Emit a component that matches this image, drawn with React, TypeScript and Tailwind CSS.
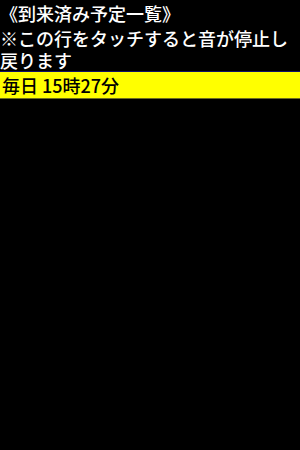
export default function App() {
  return (
    <div
      className="w-[300px] h-[450px] bg-black overflow-hidden"
      style={{ fontFamily: '"Noto Sans CJK JP", "Noto Sans", sans-serif' }}
    >
      <div className="text-white text-[18px] font-medium pt-[2px]">
        <p className="leading-[22px]">《到来済み予定一覧》</p>
        <p className="leading-[22px] mt-[3px]">※この行をタッチすると音が停止し戻ります</p>
      </div>
      <div className="border-t border-[#10106a] border-b border-b-[#6e6e1e]">
        <div className="bg-[#ffff00] text-black text-[18px] font-medium leading-[26px] px-[2px]">
          毎日 15時27分
        </div>
      </div>
    </div>
  )
}
